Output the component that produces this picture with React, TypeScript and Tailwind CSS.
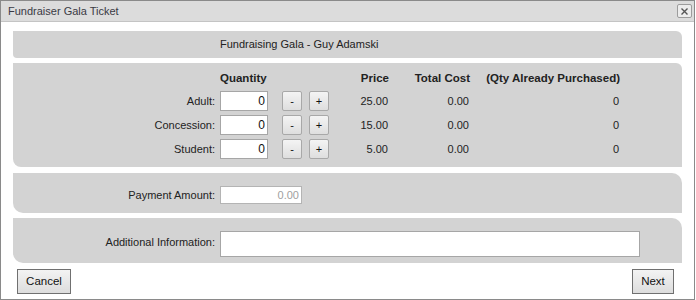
import React from "react";

const rows = [
  { label: "Adult:", price: "25.00" },
  { label: "Concession:", price: "15.00" },
  { label: "Student:", price: "5.00" },
];

function SmallBtn({ children }: { children: React.ReactNode }) {
  return (
    <button className="w-[20px] h-[20px] border border-[#a8a8a8] rounded-[2px] bg-gradient-to-b from-[#f4f4f4] to-[#dedede] text-[11px] leading-none text-[#111] flex items-center justify-center">
      {children}
    </button>
  );
}

export default function App() {
  return (
    <div className="w-[695px] h-[300px] border border-[#8a8a8a] bg-white flex flex-col font-['Liberation_Sans',Arial,sans-serif] text-[11px] text-[#222]">
      <div className="h-[21px] shrink-0 bg-[#dcdcdc] border-b border-[#c4c4c4] flex items-center justify-between pl-[7px] pr-[2px]">
        <span className="text-[#3a3a44] text-[11px]">Fundraiser Gala Ticket</span>
        <button className="w-[15px] h-[14px] border border-[#9c9c9c] rounded-[2px] bg-[#ececec] flex items-center justify-center">
          <svg width="7" height="7" viewBox="0 0 7 7">
            <path d="M0.5 0.5 L6.5 6.5 M6.5 0.5 L0.5 6.5" stroke="#555" strokeWidth="1.4" />
          </svg>
        </button>
      </div>
      <div className="px-[12px] pt-[9px] flex flex-col">
        <div className="h-[27px] bg-[#d3d3d3] rounded-tr-[6px] rounded-bl-[4px] flex items-center pl-[207px]">
          Fundraising Gala - Guy Adamski
        </div>
        <div className="mt-[5px] h-[104px] bg-[#d3d3d3] rounded-tr-[6px] rounded-bl-[8px] pt-[9px] flex flex-col">
          <div className="h-[14px] flex items-center font-bold text-[11.5px] whitespace-nowrap">
            <div className="w-[207px]" />
            <div className="w-[110px]">Quantity</div>
            <div className="w-[59px] text-right">Price</div>
            <div className="w-[81px] text-right">Total Cost</div>
            <div className="w-[150px] text-right">(Qty Already Purchased)</div>
          </div>
          <div className="mt-[5px] flex flex-col gap-[4px]">
            {rows.map((r) => (
              <div key={r.label} className="h-[20px] flex items-center whitespace-nowrap">
                <div className="w-[202px] text-right">{r.label}</div>
                <div className="w-[5px]" />
                <input
                  readOnly
                  value="0"
                  className="w-[48px] h-[20px] border border-[#a6a6a6] bg-white text-right pr-[2px] text-[12px] text-[#111] outline-none"
                />
                <div className="w-[14px]" />
                <SmallBtn>-</SmallBtn>
                <div className="w-[7px]" />
                <SmallBtn>+</SmallBtn>
                <div className="w-[59px] text-right">{r.price}</div>
                <div className="w-[81px] text-right">0.00</div>
                <div className="w-[150px] text-right">0</div>
              </div>
            ))}
          </div>
        </div>
        <div className="mt-[6px] h-[40px] bg-[#d3d3d3] rounded-tr-[10px] rounded-bl-[10px] pt-[13px] flex items-start">
          <div className="w-[202px] text-right h-[18px] leading-[18px]">Payment Amount:</div>
          <div className="w-[5px]" />
          <input
            readOnly
            value="0.00"
            className="w-[82px] h-[18px] border border-[#b4b4b4] bg-white text-right pr-[2px] text-[11px] text-[#a0a0a0] outline-none"
          />
        </div>
        <div className="mt-[5px] h-[45px] bg-[#d3d3d3] rounded-tr-[10px] rounded-bl-[10px] pt-[13px] flex items-start">
          <div className="w-[202px] text-right h-[26px] leading-[22px]">Additional Information:</div>
          <div className="w-[5px]" />
          <input
            readOnly
            value=""
            className="w-[420px] h-[26px] border border-[#a6a6a6] bg-white text-[12px] outline-none"
          />
        </div>
        <div className="mt-[6px] flex justify-between pl-[4px] pr-[8px]">
          <button className="w-[54px] h-[25px] border border-[#707070] bg-gradient-to-b from-[#f3f3f3] to-[#dddddd] text-[11.5px] text-[#111]">
            Cancel
          </button>
          <button className="w-[42px] h-[25px] border border-[#707070] bg-gradient-to-b from-[#f3f3f3] to-[#dddddd] text-[11.5px] text-[#111]">
            Next
          </button>
        </div>
      </div>
    </div>
  );
}
